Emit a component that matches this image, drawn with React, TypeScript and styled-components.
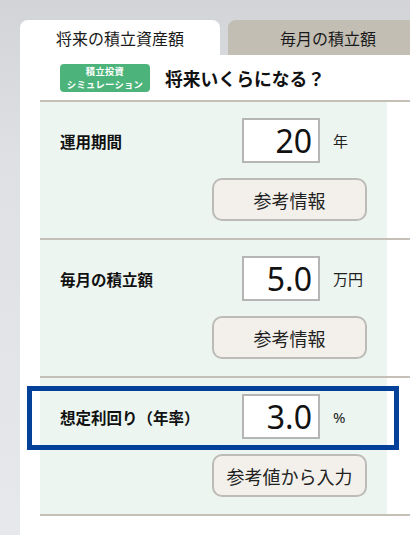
import React from "react";
import styled, { createGlobalStyle } from "styled-components";

const JP = `"Noto Sans CJK JP", "Noto Sans", sans-serif`;
const NUM = `"Noto Sans", "Noto Sans CJK JP", sans-serif`;

const Global = createGlobalStyle`
  html, body { margin: 0; padding: 0; }
  body {
    width: 410px;
    height: 535px;
    overflow: hidden;
    background: linear-gradient(180deg, #d2d4d8 0%, #dfe0e3 30%, #e7e8eb 100%);
    font-family: ${JP};
    color: #111;
  }
`;

const Page = styled.div`
  padding: 20px 0 0 20px;
`;

const Tabs = styled.div`
  display: flex;
  gap: 8px;
`;

const Tab = styled.div<{ $active?: boolean }>`
  flex: 0 0 200px;
  height: 35px;
  display: flex;
  align-items: center;
  justify-content: center;
  border-radius: 8px 8px 0 0;
  background: ${(p) => (p.$active ? "#ffffff" : "#c3beb4")};
  font-size: 16px;
  color: #1a1a1a;
`;

const Panel = styled.div`
  width: 390px;
  height: 480px;
  background: #ffffff;
  padding-left: 20px;
  box-sizing: border-box;
`;

const Header = styled.div`
  display: flex;
  align-items: center;
  gap: 15px;
  padding: 9px 0 8px 20px;
`;

const Badge = styled.div`
  width: 90px;
  height: 28px;
  border-radius: 4px;
  background: #4cb47b;
  color: #fff;
  font-weight: 700;
  font-size: 9.3px;
  line-height: 13.5px;
  display: flex;
  flex-direction: column;
  align-items: center;
  justify-content: center;
  letter-spacing: 0.3px;
`;

const BadgeLine = styled.div`
  height: 13.5px;
`;

const Title = styled.div`
  font-size: 17.8px;
  font-weight: 700;
  color: #111;
`;

const Table = styled.div`
  border-top: 2px solid #c4c0b8;
`;

const Row = styled.div`
  position: relative;
  display: flex;
  border-bottom: 2px solid #c4c0b8;
`;

const Cell = styled.div`
  width: 347px;
  flex: 0 0 347px;
  box-sizing: border-box;
  background: #ecf5f0;
  padding: 16px 20px 17px 20px;
  display: flex;
  flex-direction: column;
`;

const Filler = styled.div`
  flex: 1;
  background: #fff;
`;

const Line = styled.div`
  display: flex;
  align-items: center;
`;

const Label = styled.div`
  flex: 1;
  font-size: 15.5px;
  font-weight: 700;
  color: #111;
`;

const ValueBox = styled.div`
  width: 78px;
  height: 45px;
  box-sizing: border-box;
  border: 2px solid #b5b5b5;
  background: #fff;
  font-family: ${NUM};
  font-size: 32px;
  line-height: 41px;
  text-align: right;
  padding-right: 6px;
  color: #111;
`;

const Unit = styled.div`
  width: 34px;
  margin-left: 13px;
  font-size: 15px;
  color: #222;
  font-family: ${NUM};
`;

const ButtonRow = styled.div`
  display: flex;
  justify-content: flex-end;
  margin-top: 15px;
`;

const RefButton = styled.button`
  width: 155px;
  height: 43px;
  box-sizing: border-box;
  border: 2px solid #bdbbb8;
  border-radius: 10px;
  background: #f3f0eb;
  font-family: ${JP};
  font-size: 18px;
  color: #222;
  padding: 0;
  cursor: pointer;
`;

const Highlight = styled.div`
  position: absolute;
  left: -13px;
  top: 8px;
  width: 372px;
  height: 64px;
  box-sizing: border-box;
  border: 5px solid #03409a;
  pointer-events: none;
`;

type Item = { label: string; value: string; unit: string; button: string; highlight?: boolean };

const items: Item[] = [
  { label: "運用期間", value: "20", unit: "年", button: "参考情報" },
  { label: "毎月の積立額", value: "5.0", unit: "万円", button: "参考情報" },
  { label: "想定利回り（年率）", value: "3.0", unit: "%", button: "参考値から入力", highlight: true },
];

export default function App() {
  return (
    <>
      <Global />
      <Page>
        <Tabs>
          <Tab $active>将来の積立資産額</Tab>
          <Tab>毎月の積立額</Tab>
        </Tabs>
        <Panel>
          <Header>
            <Badge>
              <BadgeLine>積立投資</BadgeLine>
              <BadgeLine>シミュレーション</BadgeLine>
            </Badge>
            <Title>将来いくらになる？</Title>
          </Header>
          <Table>
            {items.map((it) => (
              <Row key={it.label}>
                <Cell>
                  <Line>
                    <Label>{it.label}</Label>
                    <ValueBox>{it.value}</ValueBox>
                    <Unit>{it.unit}</Unit>
                  </Line>
                  <ButtonRow>
                    <RefButton>{it.button}</RefButton>
                  </ButtonRow>
                </Cell>
                <Filler />
                {it.highlight && <Highlight />}
              </Row>
            ))}
          </Table>
        </Panel>
      </Page>
    </>
  );
}
